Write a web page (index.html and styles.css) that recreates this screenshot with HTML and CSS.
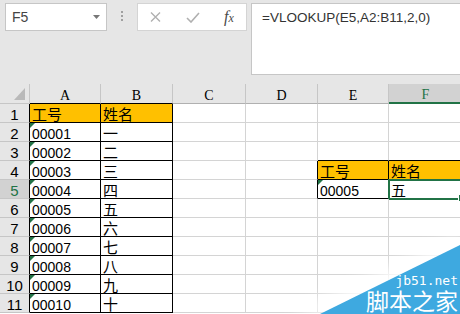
FILE: index.html
```html
<!DOCTYPE html>
<html lang="zh-CN">
<head>
  <meta charset="UTF-8" />
  <meta name="viewport" content="width=device-width, initial-scale=1" />
  <title>VLOOKUP - 工号查姓名</title>
  <link rel="stylesheet" href="styles.css">
</head>
<body>
  <div class="toolbar">
    <div class="namebox">
      <span>F5</span>
      <svg class="arrow" width="7" height="4" viewBox="0 0 7 4"><path d="M0 0H7L3.5 4Z" fill="#777"/></svg>
    </div>
    <div class="grip"><i></i><i></i><i></i></div>
    <div class="fxbox">
      <svg width="11" height="10" viewBox="0 0 11 10"><path d="M1 0.5L10 9.5M10 0.5L1 9.5" stroke="#b0b0b0" stroke-width="1.4" fill="none"/></svg>
      <svg width="14" height="11" viewBox="0 0 14 11"><path d="M1 6L5 10L13 1" stroke="#b0b0b0" stroke-width="1.6" fill="none"/></svg>
      <span class="fx"><i>f</i><i class="sub">x</i></span>
    </div>
    <div class="formula">=VLOOKUP(E5,A2:B11,2,0)</div>
  </div>

  <table class="sheet">
    <colgroup>
      <col style="width:30px"><col style="width:71px"><col style="width:72px"><col style="width:73px">
      <col style="width:72px"><col style="width:71px"><col style="width:74px">
    </colgroup>
    <tr class="cols">
      <td class="corner"></td>
      <td class="hd edge-b">A</td>
      <td class="hd edge-b">B</td>
      <td class="hd">C</td>
      <td class="hd">D</td>
      <td class="hd">E</td>
      <td class="hd cur">F</td>
    </tr>
    <tr>
      <td class="rh">1</td>
      <td class="tb head zh">工号</td>
      <td class="tb head zh">姓名</td>
      <td></td><td></td><td></td><td></td>
    </tr>
    <tr>
      <td class="rh">2</td>
      <td class="tb txt">00001</td>
      <td class="tb zh">一</td>
      <td></td><td></td><td></td><td></td>
    </tr>
    <tr>
      <td class="rh">3</td>
      <td class="tb txt">00002</td>
      <td class="tb zh">二</td>
      <td></td><td></td><td class="edge-b"></td><td class="edge-b"></td>
    </tr>
    <tr>
      <td class="rh">4</td>
      <td class="tb txt">00003</td>
      <td class="tb zh">三</td>
      <td></td><td class="edge-r"></td>
      <td class="tb head zh">工号</td>
      <td class="tb head zh">姓名</td>
    </tr>
    <tr>
      <td class="rh cur">5</td>
      <td class="tb txt">00004</td>
      <td class="tb zh">四</td>
      <td></td><td class="edge-r"></td>
      <td class="tb txt">00005</td>
      <td class="tb zh sel">五</td>
    </tr>
    <tr>
      <td class="rh">6</td>
      <td class="tb txt">00005</td>
      <td class="tb zh">五</td>
      <td></td><td></td><td></td><td></td>
    </tr>
    <tr>
      <td class="rh">7</td>
      <td class="tb txt">00006</td>
      <td class="tb zh">六</td>
      <td></td><td></td><td></td><td></td>
    </tr>
    <tr>
      <td class="rh">8</td>
      <td class="tb txt">00007</td>
      <td class="tb zh">七</td>
      <td></td><td></td><td></td><td></td>
    </tr>
    <tr>
      <td class="rh">9</td>
      <td class="tb txt">00008</td>
      <td class="tb zh">八</td>
      <td></td><td></td><td></td><td></td>
    </tr>
    <tr>
      <td class="rh">10</td>
      <td class="tb txt">00009</td>
      <td class="tb zh">九</td>
      <td></td><td></td><td></td><td></td>
    </tr>
    <tr>
      <td class="rh">11</td>
      <td class="tb txt">00010</td>
      <td class="tb zh">十</td>
      <td></td><td></td><td></td><td></td>
    </tr>
  </table>

  <div class="mark">
    <div class="mark-glow"><div></div></div>
    <div class="mark-bg"></div>
    <div class="mark-text">
      <span class="site">jb51.net</span>
      <span class="brand">脚本之家</span>
    </div>
  </div>
</body>
</html>
```

FILE: styles.css
```css
:root {
  --bar: #e6e6e6;
  --grid: #d4d4d4;
  --head-line: #c6c6c6;
  --green: #217346;
  --orange: #ffc000;
}
* {
  box-sizing: border-box;
}
body {
  margin: 0;
  width: 460px;
  height: 314px;
  overflow: hidden;
  position: relative;
  background: #fff;
  font-family: "Liberation Sans", "Noto Sans CJK SC", sans-serif;
}

/* formula bar */
.toolbar {
  height: 84px;
  background: var(--bar);
  display: flex;
  align-items: flex-start;
  padding: 3px 0 0 5px;
}
.namebox {
  width: 102px;
  height: 28px;
  background: #fff;
  border: 1px solid var(--head-line);
  display: flex;
  align-items: center;
  justify-content: space-between;
  padding: 0 6px 0 6px;
  font-size: 14px;
  color: #444;
}
.grip {
  width: 30px;
  display: flex;
  flex-direction: column;
  align-items: center;
  gap: 2px;
  padding-top: 8px;
}
.grip i {
  width: 2px;
  height: 2px;
  background: #a0a0a0;
}
.fxbox {
  width: 110px;
  height: 28px;
  background: #fff;
  border: 1px solid #d4d4d4;
  display: flex;
  align-items: center;
  justify-content: space-around;
}
.fx {
  font-family: "Liberation Serif", serif;
  font-size: 16px;
  color: #4a4a4a;
  line-height: 1;
}
.fx .sub {
  font-size: 12px;
}
.formula {
  flex: 1;
  margin: 0 -4px 0 4px;
  height: 72px;
  background: #fff;
  border: 1px solid var(--head-line);
  padding: 5px 0 0 10px;
  font-size: 13.5px;
  line-height: 18px;
  color: #333;
}

/* grid */
.sheet {
  border-collapse: separate;
  border-spacing: 0;
  table-layout: fixed;
  width: 463px;
}
.sheet tr {
  height: 19px;
}
.sheet tr.cols {
  height: 20px;
}
.sheet td {
  border-right: 1px solid var(--grid);
  border-bottom: 1px solid var(--grid);
  padding: 0 0 0 2px;
  vertical-align: bottom;
  font-size: 14px;
  line-height: 14px;
  white-space: nowrap;
  position: relative;
  color: #000;
}
.sheet td.zh {
  font-size: 15px;
}
.corner,
.hd,
.rh {
  background: var(--bar);
  color: #444;
  text-align: center;
}
.sheet .corner {
  border-right-color: var(--head-line);
  border-bottom-color: var(--head-line);
}
.corner::after {
  content: "";
  position: absolute;
  right: 4px;
  bottom: 3px;
  border-left: 11px solid transparent;
  border-bottom: 12px solid #b9b9b9;
}
.sheet .hd {
  padding: 0;
  font-family: "Liberation Serif", serif;
  border-right-color: var(--head-line);
  border-bottom-color: #b0b0b0;
}
.sheet .rh {
  padding: 0;
  font-size: 15px;
  border-right-color: #000;
  border-bottom-color: var(--head-line);
}
.sheet .cur {
  background: #d2d2d2;
  color: var(--green);
}
.sheet .hd.cur {
  border-bottom: 2px solid var(--green);
}
.sheet .tb {
  border-right-color: #000;
  border-bottom-color: #000;
}
.sheet .edge-r {
  border-right-color: #000;
}
.sheet .edge-b {
  border-bottom-color: #000;
}
.head {
  background: var(--orange);
}
.txt::before {
  content: "";
  position: absolute;
  left: 0;
  top: 0;
  border-top: 5px solid var(--green);
  border-right: 5px solid transparent;
}
.sel {
  outline: 2px solid var(--green);
  outline-offset: -1px;
}
.sel::after {
  content: "";
  position: absolute;
  right: -4px;
  bottom: -4px;
  width: 6px;
  height: 6px;
  background: var(--green);
  border: 1px solid #fff;
}

/* watermark */
.mark {
  position: absolute;
  right: 0;
  bottom: 0;
  width: 140px;
  height: 69px;
}
.mark-glow {
  position: absolute;
  inset: -10px 0 0 -30px;
  filter: blur(8px);
}
.mark-glow div {
  position: absolute;
  inset: 0;
  background: rgba(255, 255, 255, 0.9);
  clip-path: polygon(0 100%, 100% 0, 100% 100%);
}
.mark-bg {
  position: absolute;
  inset: 0;
  background: #3ea9e0;
  clip-path: polygon(0 100%, 100% 0, 100% 100%);
}
.mark-text {
  position: absolute;
  right: 2px;
  bottom: 2px;
  display: flex;
  flex-direction: column;
  align-items: flex-end;
  color: #fff;
}
.site {
  font-family: "DejaVu Sans Mono", monospace;
  font-size: 13px;
  line-height: 14px;
}
.brand {
  font-family: "Noto Sans CJK SC", sans-serif;
  font-size: 23px;
  line-height: 24px;
}
```
